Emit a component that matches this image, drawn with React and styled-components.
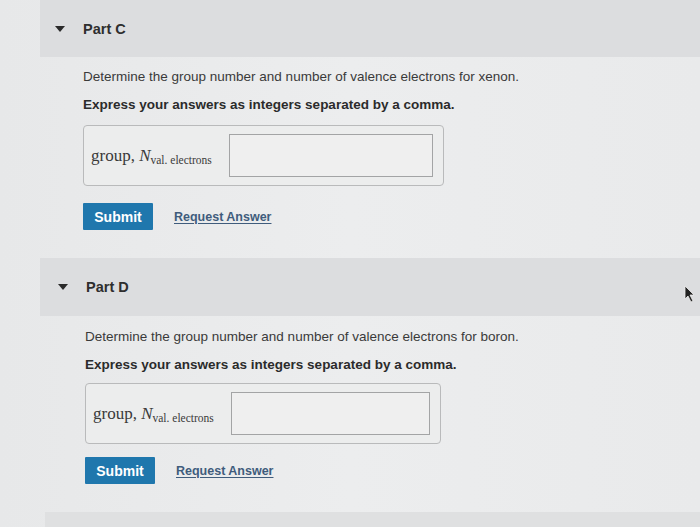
import styled, { createGlobalStyle } from "styled-components";

const Global = createGlobalStyle`
  html, body {
    margin: 0;
    padding: 0;
    background: #e9eaeb;
    font-family: "Liberation Sans", Arial, sans-serif;
    color: #333;
  }
`;

const Page = styled.div`
  width: 700px;
  height: 527px;
  overflow: hidden;
  position: relative;
  background: linear-gradient(90deg, #e7e8e9 0%, #ecedee 50%, #e9eaeb 100%);
`;

const Header = styled.div`
  margin-left: 40px;
  height: ${(p) => p.$h}px;
  background: #dcdddf;
  display: flex;
  align-items: center;
  padding-left: ${(p) => p.$pad}px;
  gap: 18px;
  font-size: 14.5px;
  font-weight: 600;
  color: #2e2e2e;
`;

const Caret = styled.span`
  width: 0;
  height: 0;
  border-left: 5px solid transparent;
  border-right: 5px solid transparent;
  border-top: 6px solid #2a2a2a;
`;

const Body = styled.div`
  padding-left: ${(p) => p.$indent}px;
  padding-top: ${(p) => p.$top}px;
  padding-bottom: 28px;
`;

const Para = styled.p`
  margin: 0 0 8px;
  font-size: 13.5px;
  line-height: 20px;
  font-weight: ${(p) => (p.$bold ? 700 : 400)};
  color: ${(p) => (p.$bold ? "#2b2b2b" : "#3a3a3a")};
`;

const AnswerBox = styled.div`
  margin-top: ${(p) => p.$mt}px;
  width: ${(p) => p.$w}px;
  height: 61px;
  box-sizing: border-box;
  border: 1px solid #b9babb;
  border-radius: 4px;
  background: #eceded;
  display: flex;
  align-items: center;
  padding: 0 10px 0 7px;
  gap: 7px;
`;

const Label = styled.span`
  font-family: "Liberation Serif", "DejaVu Serif", serif;
  font-size: 17px;
  color: #3a3a3a;
  white-space: nowrap;
  width: 131px;

  i {
    font-style: italic;
  }

  sub {
    font-size: 11.5px;
    font-style: normal;
    vertical-align: -3px;
  }
`;

const Input = styled.div`
  flex: 1;
  height: 43px;
  box-sizing: border-box;
  border: 1.5px solid #a3a4a5;
  background: #efefef;
`;

const Actions = styled.div`
  margin-top: ${(p) => p.$mt}px;
  display: flex;
  align-items: center;
  gap: 21px;
`;

const Submit = styled.button`
  width: 70px;
  height: 27px;
  border: none;
  border-radius: 1px;
  background: #1f77ad;
  color: #fff;
  font-family: "Liberation Sans", Arial, sans-serif;
  font-weight: 700;
  font-size: 14px;
  padding: 0;
`;

const Link = styled.a`
  color: #3f5c7c;
  font-size: 12.5px;
  font-weight: 700;
  text-decoration: underline;
  text-underline-offset: 2px;
`;

const Bottom = styled.div`
  margin-left: 45px;
  height: 20px;
  background: #dfe0e1;
`;

const Cursor = styled.svg`
  position: absolute;
  left: 684px;
  top: 285px;
`;

const Part = ({ name, element, pad, h, indent, top, boxW, boxMt, actMt }) => (
  <>
    <Header $pad={pad} $h={h}>
      <Caret />
      <span>Part {name}</span>
    </Header>
    <Body $indent={indent} $top={top}>
      <Para>
        Determine the group number and number of valence electrons for {element}.
      </Para>
      <Para $bold>Express your answers as integers separated by a comma.</Para>
      <AnswerBox $w={boxW} $mt={boxMt}>
        <Label>
          group, <i>N</i>
          <sub>val. electrons</sub>
        </Label>
        <Input />
      </AnswerBox>
      <Actions $mt={actMt}>
        <Submit>Submit</Submit>
        <Link>Request Answer</Link>
      </Actions>
    </Body>
  </>
);

export default function App() {
  return (
    <Page>
      <Global />
      <Part name="C" element="xenon" pad={15} h={57} indent={83} top={10} boxW={361} boxMt={10} actMt={17} />
      <Part name="D" element="boron" pad={18} h={58} indent={85} top={11} boxW={356} boxMt={7} actMt={13} />
      <Bottom />
      <Cursor width="12" height="18" viewBox="0 0 12 18">
        <path d="M1 1 L1 14 L4 11 L7 17 L9 16 L6 10 L10 10 Z" fill="#222" stroke="#eee" strokeWidth="0.8" />
      </Cursor>
    </Page>
  );
}
